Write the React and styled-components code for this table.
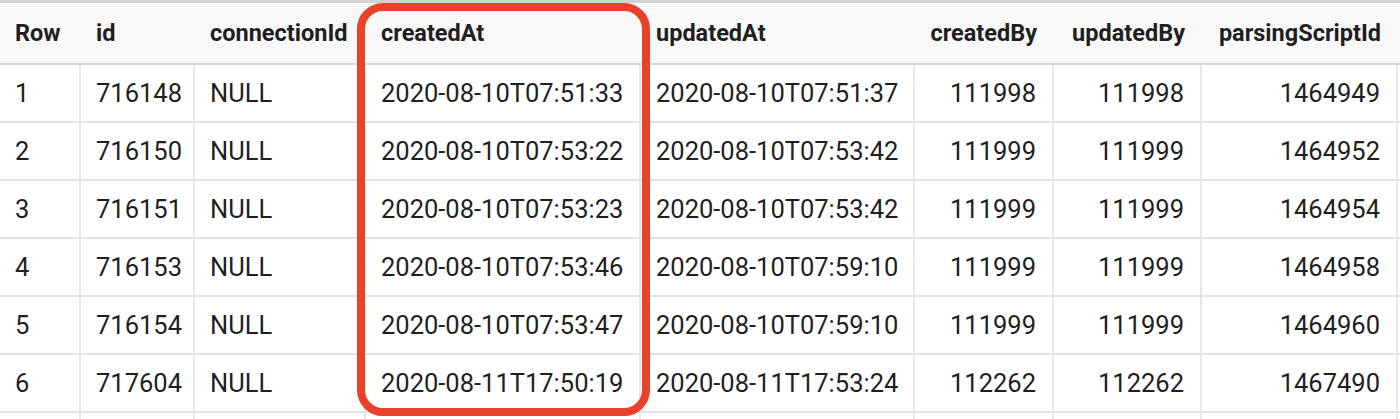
import React from "react";
import styled, { createGlobalStyle } from "styled-components";

const Global = createGlobalStyle`
  html, body { margin: 0; padding: 0; background: #ffffff; }
  body { font-family: Roboto, "Liberation Sans", Arial, sans-serif; color: #202124; overflow: hidden; }
`;

const COLS = "81px 114px 171px 275px 274px 139px 148px 196px 1fr";

const Wrap = styled.div`
  position: relative;
  width: 1400px;
  height: 419px;
  overflow: hidden;
  border-top: 3px solid #d2d2d2;
  box-sizing: border-box;
`;

const HeadRow = styled.div`
  display: grid;
  grid-template-columns: ${COLS};
  height: 60px;
  background: #f8f8f8;
  border-bottom: 2px solid #d6d6d6;
  box-sizing: content-box;
`;

const HeadCell = styled.div`
  display: flex;
  align-items: center;
  justify-content: ${(p) => (p.$right ? "flex-end" : "flex-start")};
  padding: 0 ${(p) => (p.$right ? "17px" : "0")} 0 ${(p) => (p.$right ? "0" : "15px")};
  font-size: 23.5px;
  font-weight: 700;
  color: #1f1f1f;
  white-space: nowrap;
`;

const Row = styled.div`
  display: grid;
  grid-template-columns: ${COLS};
  height: 56px;
  border-bottom: 2px solid #e2e2e2;
  box-sizing: content-box;
`;

const Cell = styled.div`
  display: flex;
  align-items: center;
  justify-content: ${(p) => (p.$right ? "flex-end" : "flex-start")};
  padding: 0 ${(p) => (p.$right ? "16px" : "0")} 0 ${(p) => (p.$right ? "0" : "15px")};
  border-right: ${(p) => (p.$last ? "none" : "2px solid #e8e8e8")};
  font-size: 25.5px;
  color: #1f1f1f;
  white-space: nowrap;
  box-sizing: border-box;
`;

const Highlight = styled.div`
  position: absolute;
  left: 357px;
  top: 0px;
  width: 293px;
  height: 413px;
  border: 8px solid #e8412c;
  border-radius: 26px;
  box-sizing: border-box;
  pointer-events: none;
`;

const headers = [
  ["Row", false],
  ["id", false],
  ["connectionId", false],
  ["createdAt", false],
  ["updatedAt", false],
  ["createdBy", true],
  ["updatedBy", true],
  ["parsingScriptId", true],
  ["", false],
];

const data = [
  ["1", "716148", "NULL", "2020-08-10T07:51:33", "2020-08-10T07:51:37", "111998", "111998", "1464949"],
  ["2", "716150", "NULL", "2020-08-10T07:53:22", "2020-08-10T07:53:42", "111999", "111999", "1464952"],
  ["3", "716151", "NULL", "2020-08-10T07:53:23", "2020-08-10T07:53:42", "111999", "111999", "1464954"],
  ["4", "716153", "NULL", "2020-08-10T07:53:46", "2020-08-10T07:59:10", "111999", "111999", "1464958"],
  ["5", "716154", "NULL", "2020-08-10T07:53:47", "2020-08-10T07:59:10", "111999", "111999", "1464960"],
  ["6", "717604", "NULL", "2020-08-11T17:50:19", "2020-08-11T17:53:24", "112262", "112262", "1467490"],
];

export default function App() {
  return (
    <>
      <Global />
      <Wrap>
        <HeadRow>
          {headers.map(([h, r], i) => (
            <HeadCell key={i} $right={r}>
              {h}
            </HeadCell>
          ))}
        </HeadRow>
        {data.map((row, ri) => (
          <Row key={ri}>
            {row.map((v, ci) => (
              <Cell key={ci} $right={ci >= 5}>
                {v}
              </Cell>
            ))}
            <Cell $last />
          </Row>
        ))}
        <Row>
          {headers.map((_, ci) => (
            <Cell key={ci} $last={ci === headers.length - 1} />
          ))}
        </Row>
        <Highlight />
      </Wrap>
    </>
  );
}
